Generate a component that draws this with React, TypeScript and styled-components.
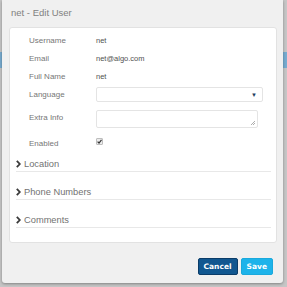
import { createGlobalStyle } from 'styled-components';
import styled from 'styled-components';

const GlobalStyle = createGlobalStyle`
	html, body {
		margin: 0;
		padding: 0;
		background: #c6c6c6;
		font-family: 'Liberation Sans', Arial, sans-serif;
	}
`;

const Page = styled.div`
	position: relative;
	width: 287px;
	height: 287px;
	overflow: hidden;
	background: #c6c6c6;
`;

const BackBar = styled.div`
	position: absolute;
	left: 0;
	right: 0;
	top: 52px;
	height: 16px;
	background: #78acd0;
`;

const Modal = styled.div`
	position: absolute;
	left: 2px;
	top: 0;
	width: 281px;
	height: 283px;
	box-sizing: border-box;
	background: #f0f0f0;
	border-radius: 0 0 3px 3px;
	box-shadow: 0 1px 3px rgba(0, 0, 0, 0.35);
	display: flex;
	flex-direction: column;
`;

const Title = styled.h4`
	margin: 0;
	padding: 7px 9px 0;
	height: 22px;
	box-sizing: border-box;
	font-size: 9.5px;
	line-height: 11px;
	font-weight: normal;
	color: #808080;
`;

const Body = styled.div`
	margin: 5px 6px 0 7px;
	height: 216px;
	box-sizing: border-box;
	background: #fff;
	border: 1px solid #e2e2e2;
	border-radius: 3px;
	padding: 4px 5px 0 6px;
`;

const Grid = styled.div`
	display: grid;
	grid-template-columns: 67px 1fr;
	grid-template-rows: 17px 18px 18px 19px 26px 26px;
	align-items: center;
	padding-left: 13px;
	padding-right: 8px;
`;

const Label = styled.div`
	font-size: 8px;
	color: #767676;
`;

const Value = styled.div`
	font-size: 7.5px;
	color: #505050;
`;

const SelectBox = styled.div`
	height: 15px;
	box-sizing: border-box;
	border: 1px solid #e4e4e4;
	border-radius: 2px;
	display: flex;
	align-items: center;
	justify-content: flex-end;
	padding-right: 5px;
`;

const Arrow = styled.span`
	font-size: 6px;
	color: #1d3f5e;
`;

const TextArea = styled.div`
	position: relative;
	margin-top: 6px;
	align-self: start;
	height: 18px;
	width: 162px;
	box-sizing: border-box;
	border: 1px solid #e4e4e4;
	border-radius: 2px;
`;

const Grip = styled.svg`
	position: absolute;
	right: 1px;
	bottom: 1px;
`;

const Check = styled.div`
	width: 7px;
	height: 7px;
	box-sizing: border-box;
	border: 1px solid #bdbdbd;
	border-radius: 1px;
	background: #ececec;
	display: flex;
	align-items: center;
	justify-content: center;
	margin-top: -3px;
`;

const Sections = styled.div`
	display: flex;
	flex-direction: column;
	gap: 12px;
`;

const Section = styled.div`
	height: 16px;
	box-sizing: border-box;
	padding-bottom: 0;
	border-bottom: 1px solid #e8e8e8;
	display: flex;
	align-items: center;
	gap: 3px;
	font-size: 9.3px;
	color: #727272;
`;

const Footer = styled.div`
	display: flex;
	justify-content: flex-end;
	gap: 3px;
	padding: 15px 10px 0 0;
`;

const Button = styled.button<{ $primary?: boolean }>`
	height: 17px;
	padding: 0 5px;
	border: 1px solid ${(p) => (p.$primary ? '#1aa9dc' : '#0b3c68')};
	border-radius: 2px;
	background: ${(p) => (p.$primary ? '#1db3ea' : '#115790')};
	color: #fff;
	font-family: 'DejaVu Sans', sans-serif;
	font-size: 7.5px;
	font-weight: bold;
	cursor: pointer;
`;

const Chevron = () => (
	<svg width="5" height="8" viewBox="0 0 5 8">
		<path d="M0.8 0.8 L3.8 4 L0.8 7.2" fill="none" stroke="#3a3a3a" strokeWidth="1.8" />
	</svg>
);

export default function App() {
	return (
		<Page>
			<GlobalStyle />
			<BackBar />
			<Modal>
				<Title>net - Edit User</Title>
				<Body>
					<Grid>
						<Label>Username</Label>
						<Value>net</Value>
						<Label>Email</Label>
						<Value>net@algo.com</Value>
						<Label>Full Name</Label>
						<Value>net</Value>
						<Label>Language</Label>
						<SelectBox>
							<Arrow>▼</Arrow>
						</SelectBox>
						<Label>Extra Info</Label>
						<TextArea>
							<Grip width="6" height="6" viewBox="0 0 6 6">
								<path d="M1 5 L5 1 M3 5 L5 3" stroke="#999" strokeWidth="0.8" />
							</Grip>
						</TextArea>
						<Label>Enabled</Label>
						<Check>
							<svg width="5" height="5" viewBox="0 0 5 5">
								<path d="M0.6 2.6 L2 4 L4.5 0.8" fill="none" stroke="#333" strokeWidth="1.2" />
							</svg>
						</Check>
					</Grid>
					<Sections>
						<Section>
							<Chevron />
							Location
						</Section>
						<Section>
							<Chevron />
							Phone Numbers
						</Section>
						<Section>
							<Chevron />
							Comments
						</Section>
					</Sections>
				</Body>
				<Footer>
					<Button>Cancel</Button>
					<Button $primary>Save</Button>
				</Footer>
			</Modal>
		</Page>
	);
}
